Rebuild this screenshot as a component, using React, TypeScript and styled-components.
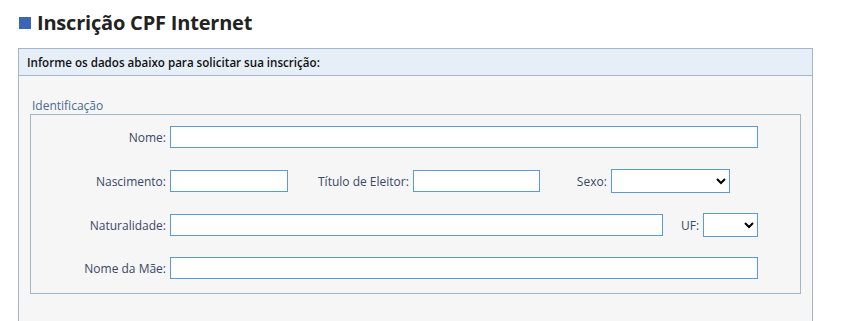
import React from "react";
import styled, { createGlobalStyle } from "styled-components";

const Global = createGlobalStyle`
  html, body { margin: 0; padding: 0; background: #ffffff; }
  body { font-family: "Open Sans", "Liberation Sans", sans-serif; }
  * { box-sizing: border-box; }
`;

const Page = styled.div`
  padding: 8px 38px 0 18px;
  width: 851px;
`;

const Title = styled.h1`
  display: flex;
  align-items: center;
  gap: 6px;
  margin: 0 0 12px 1px;
  height: 28px;
  font-size: 20px;
  font-weight: 700;
  color: #222;
  letter-spacing: -0.2px;
`;

const Square = styled.span`
  width: 12px;
  height: 12px;
  background: #3a66b4;
  flex: none;
  margin-top: 2px;
`;

const Panel = styled.section`
  border: 1px solid #a3b6cf;
  border-bottom: none;
  width: 795px;
`;

const PanelHeader = styled.div`
  height: 27px;
  background: #e6eef7;
  border-bottom: 1px solid #a3b6cf;
  display: flex;
  align-items: center;
  padding-left: 8px;
  font-size: 11.6px;
  font-weight: 600;
  color: #111;
`;

const PanelBody = styled.div`
  background: #f6f6f6;
  padding: 21px 11px 30px 11px;
`;

const GroupTitle = styled.div`
  font-size: 12px;
  color: #4a6a96;
  padding-left: 2px;
  line-height: 17px;
`;

const Group = styled.div`
  border: 1px solid #a3b6cf;
  padding: 11px 0 14px 0;
  display: flex;
  flex-direction: column;
  gap: 22px;
`;

const Row = styled.div<{ $gapBefore?: number }>`
  display: flex;
  align-items: center;
  height: 22px;
  margin-top: ${(p) => p.$gapBefore ?? 0}px;
`;

const Label = styled.label<{ $width?: number; $ml?: number }>`
  font-size: 12px;
  color: #384866;
  text-align: right;
  white-space: nowrap;
  width: ${(p) => (p.$width ? `${p.$width}px` : "auto")};
  margin-left: ${(p) => p.$ml ?? 0}px;
  margin-right: 4px;
  flex: none;
`;

const Input = styled.input<{ $w: number }>`
  width: ${(p) => p.$w}px;
  height: 22px;
  border: 1px solid #5b9bd5;
  background: #fff;
  padding: 0 4px;
  font-family: inherit;
  font-size: 12px;
  outline: none;
  flex: none;
`;

const Select = styled.select<{ $w: number }>`
  width: ${(p) => p.$w}px;
  height: 24px;
  border: 1px solid #5b9bd5;
  border-radius: 0;
  background: #fff;
  font-family: inherit;
  font-size: 12px;
  color: #000;
  outline: none;
  flex: none;
`;

export default function App() {
  return (
    <>
      <Global />
      <Page>
        <Title>
          <Square />
          Inscrição CPF Internet
        </Title>
        <Panel>
          <PanelHeader>Informe os dados abaixo para solicitar sua inscrição:</PanelHeader>
          <PanelBody>
            <GroupTitle>Identificação</GroupTitle>
            <Group>
              <Row>
                <Label $width={135}>Nome:</Label>
                <Input $w={588} />
              </Row>
              <Row>
                <Label $width={135}>Nascimento:</Label>
                <Input $w={118} />
                <Label $ml={30}>Título de Eleitor:</Label>
                <Input $w={127} />
                <Label $ml={37}>Sexo:</Label>
                <Select $w={119}>
                  <option></option>
                  <option>Masculino</option>
                  <option>Feminino</option>
                </Select>
              </Row>
              <Row>
                <Label $width={135}>Naturalidade:</Label>
                <Input $w={493} />
                <Label $ml={18}>UF:</Label>
                <Select $w={55}>
                  <option></option>
                </Select>
              </Row>
              <Row $gapBefore={-1}>
                <Label $width={135}>Nome da Mãe:</Label>
                <Input $w={588} />
              </Row>
            </Group>
          </PanelBody>
        </Panel>
      </Page>
    </>
  );
}
